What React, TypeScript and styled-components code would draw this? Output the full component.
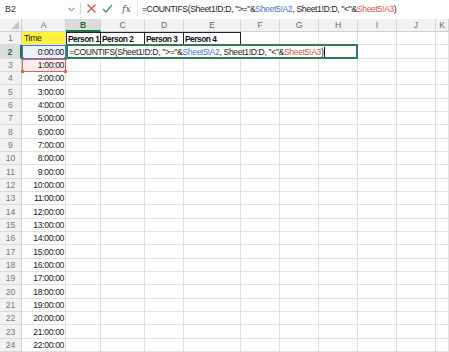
import styled, { createGlobalStyle } from 'styled-components'

const GlobalStyle = createGlobalStyle`
  html, body {
    margin: 0;
    padding: 0;
    background: #ffffff;
  }
  body {
    font-family: "Liberation Sans", Arial, sans-serif;
    font-size: 8.6px;
    letter-spacing: -0.35px;
    color: #1a1a1a;
  }
`

const COLUMNS = ['A', 'B', 'C', 'D', 'E', 'F', 'G', 'H', 'I', 'J', 'K']
const ROW_COUNT = 24

const Window = styled.div`
  width: 449px;
  height: 352px;
  overflow: hidden;
  display: flex;
  flex-direction: column;
  background: #ffffff;
`

const FormulaBar = styled.div`
  display: flex;
  align-items: center;
  height: 23px;
  padding-bottom: 2px;
  background: #ffffff;
`

const NameBox = styled.div`
  display: flex;
  align-items: center;
  justify-content: space-between;
  width: 78px;
  height: 100%;
  padding: 0 3px 0 5px;
  box-sizing: border-box;
  font-size: 9px;
  letter-spacing: 0;
  color: #333;
`

const Chevron = styled.svg`
  width: 7px;
  height: 5px;
  margin-top: 2px;
`

const Divider = styled.div`
  width: 1px;
  height: 12px;
  background: #d6d6d6;
  margin: 0 5px 0 2px;
`

const BarIcon = styled.svg`
  width: 11px;
  height: 11px;
  margin-right: 5px;
`

const Fx = styled.span`
  font-family: "DejaVu Serif", "Liberation Serif", serif;
  font-style: italic;
  font-size: 9.5px;
  letter-spacing: 0;
  color: #555;
  margin: 0 6px 0 4px;
`

const FormulaText = styled.div`
  flex: 1;
  display: flex;
  align-items: center;
  height: 100%;
  padding-left: 4px;
  border-left: 1px solid #e4e4e4;
  white-space: nowrap;
  overflow: hidden;
  color: #222;
`

const Sheet = styled.div`
  display: grid;
  grid-template-columns: 22px 44px 35px 44px 39px 57px 39px 39px 39px 39px 39px 1fr;
  grid-template-rows: 13px repeat(${ROW_COUNT}, 13.333px);
`

const Corner = styled.div`
  background: #f2f2f2;
  border-right: 1px solid #cfcfcf;
  border-bottom: 1px solid #cfcfcf;
  position: relative;
  &::after {
    content: '';
    position: absolute;
    right: 2px;
    bottom: 2px;
    border-style: solid;
    border-width: 0 0 8px 8px;
    border-color: transparent transparent #c4c4c4 transparent;
  }
`

const ColHead = styled.div<{ $active?: boolean }>`
  display: flex;
  align-items: center;
  justify-content: center;
  box-sizing: border-box;
  font-size: 8.6px;
  letter-spacing: 0;
  background: ${(p) => (p.$active ? '#dcdcdc' : '#f2f2f2')};
  color: ${(p) => (p.$active ? '#1e6b3c' : '#666')};
  font-weight: ${(p) => (p.$active ? 700 : 400)};
  border-right: 1px solid #d4d4d4;
  border-bottom: ${(p) => (p.$active ? '2px solid #217346' : '1px solid #cfcfcf')};
`

const RowHead = styled.div<{ $active?: boolean }>`
  display: flex;
  align-items: center;
  justify-content: center;
  box-sizing: border-box;
  font-size: 8.6px;
  letter-spacing: 0;
  background: ${(p) => (p.$active ? '#dcdcdc' : '#f2f2f2')};
  color: ${(p) => (p.$active ? '#1e6b3c' : '#777')};
  font-weight: ${(p) => (p.$active ? 700 : 400)};
  border-right: ${(p) => (p.$active ? '2px solid #217346' : '1px solid #cfcfcf')};
  border-bottom: 1px solid #dadada;
`

const Cell = styled.div<{ $align?: 'left' | 'right' }>`
  display: flex;
  align-items: center;
  justify-content: ${(p) => (p.$align === 'right' ? 'flex-end' : 'flex-start')};
  box-sizing: border-box;
  padding: 0 1px 0 2px;
  border-right: 1px solid #e1e1e1;
  border-bottom: 1px solid #e1e1e1;
  white-space: nowrap;
  overflow: hidden;
`

const YellowCell = styled(Cell)`
  background: #fff23d;
`

const HeaderCell = styled(Cell)<{ $first?: boolean }>`
  padding: 0 0 0 1px;
  font-size: 8.4px;
  letter-spacing: -0.5px;
  font-weight: 700;
  color: #111;
  border-top: 1px solid #222;
  border-right: 1px solid #222;
  border-bottom: 1px solid #222;
  border-left: ${(p) => (p.$first ? '1px solid #222' : 'none')};
`

const RefCell = styled(Cell)<{ $tone: 'blue' | 'red' }>`
  position: relative;
  overflow: visible;
  background: ${(p) => (p.$tone === 'blue' ? '#edf2fc' : '#fcecec')};
  border: 1px solid ${(p) => (p.$tone === 'blue' ? '#4a78d0' : '#e0605a')};
  &::before,
  &::after {
    content: '';
    position: absolute;
    width: 3px;
    height: 3px;
    bottom: -2px;
    background: ${(p) => (p.$tone === 'blue' ? '#4a78d0' : '#e0605a')};
  }
  &::before {
    left: -2px;
  }
  &::after {
    right: -2px;
  }
`

const EditCell = styled.div`
  grid-column: 3 / 10;
  display: flex;
  align-items: center;
  box-sizing: border-box;
  padding: 0 1px;
  margin-top: -1px;
  height: calc(100% + 1px);
  background: #ffffff;
  border: 2px solid #2f7d4e;
  white-space: nowrap;
  overflow: hidden;
  color: #222;
`

const Ref = styled.span<{ $tone: 'blue' | 'red' }>`
  color: ${(p) => (p.$tone === 'blue' ? '#4a72d4' : '#e0544c')};
`

const Caret = styled.span`
  display: inline-block;
  width: 1px;
  height: 10px;
  margin-left: 1px;
  background: #111;
`

const Formula = ({ caret }: { caret?: boolean }) => (
  <>
    =COUNTIFS(Sheet1!D:D, "&gt;="&amp;<Ref $tone="blue">Sheet5!A2</Ref>, Sheet1!D:D, "&lt;"&amp;
    <Ref $tone="red">Sheet5!A3</Ref>)
    {caret && <Caret />}
  </>
)

const time = (h: number) => `${h}:00:00`

export default function App() {
  const rows = []
  for (let r = 1; r <= ROW_COUNT; r++) {
    const cells = []
    cells.push(
      <RowHead key="h" $active={r === 2}>
        {r}
      </RowHead>,
    )
    if (r === 1) {
      cells.push(<YellowCell key="a">Time</YellowCell>)
      ;['Person 1', 'Person 2', 'Person 3', 'Person 4'].forEach((p, i) =>
        cells.push(
          <HeaderCell key={p} $first={i === 0}>
            {p}
          </HeaderCell>,
        ),
      )
      for (let c = 5; c < COLUMNS.length; c++) cells.push(<Cell key={c} />)
    } else if (r === 2) {
      cells.push(
        <RefCell key="a" $tone="blue" $align="right">
          {time(0)}
        </RefCell>,
      )
      cells.push(
        <EditCell key="edit">
          <Formula caret />
        </EditCell>,
      )
      for (let c = 8; c < COLUMNS.length; c++) cells.push(<Cell key={c} />)
    } else {
      cells.push(
        r === 3 ? (
          <RefCell key="a" $tone="red" $align="right">
            {time(1)}
          </RefCell>
        ) : (
          <Cell key="a" $align="right">
            {time(r - 2)}
          </Cell>
        ),
      )
      for (let c = 1; c < COLUMNS.length; c++) cells.push(<Cell key={c} />)
    }
    rows.push(...cells.map((cell, i) => ({ cell, key: `${r}-${i}` })))
  }

  return (
    <Window>
      <GlobalStyle />
      <FormulaBar>
        <NameBox>
          B2
          <Chevron viewBox="0 0 7 5">
            <path d="M0.5 0.8 L3.5 3.8 L6.5 0.8" fill="none" stroke="#666" strokeWidth="1" />
          </Chevron>
        </NameBox>
        <Divider />
        <BarIcon viewBox="0 0 11 11">
          <path d="M1.5 1.5 L9.5 9.5 M9.5 1.5 L1.5 9.5" stroke="#e04a4f" strokeWidth="1.2" />
        </BarIcon>
        <BarIcon viewBox="0 0 11 11">
          <path d="M1 6 L4 9 L10 2" fill="none" stroke="#3d9a5e" strokeWidth="1.2" />
        </BarIcon>
        <Fx>fx</Fx>
        <FormulaText>
          <Formula />
        </FormulaText>
      </FormulaBar>
      <Sheet>
        <Corner />
        {COLUMNS.map((c) => (
          <ColHead key={c} $active={c === 'B'}>
            {c}
          </ColHead>
        ))}
        {rows.map(({ cell, key }) => (
          <span key={key} style={{ display: 'contents' }}>
            {cell}
          </span>
        ))}
      </Sheet>
    </Window>
  )
}
